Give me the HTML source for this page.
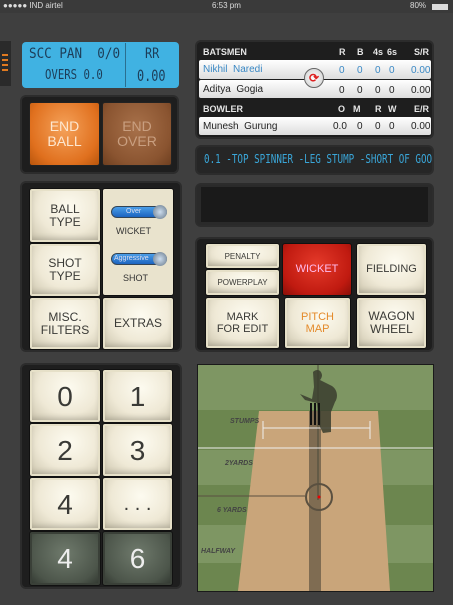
<!DOCTYPE html>
<html><head><meta charset="utf-8"><style>
*{margin:0;padding:0;box-sizing:border-box}
body{width:453px;height:605px;overflow:hidden;background:#3f3f3f;font-family:"Liberation Sans",sans-serif;position:relative}
.a{position:absolute}
.panel{position:absolute;background:#1e1e1e;border-radius:4px;box-shadow:0 0 0 2px #2c2c2c}
.c{position:absolute;display:flex;align-items:center;justify-content:center;text-align:center;color:#3a3a36;font-size:12px;line-height:13px;background:radial-gradient(ellipse at 55% 35%,#fdfbf0 0%,#efe9d6 55%,#c9c2aa 100%);border:1px solid #111;border-radius:3px;box-shadow:inset 0 0 0 2px #e6e0c8,inset 0 -4px 6px rgba(0,0,0,.18)}
.t{position:absolute;font-size:10px;color:#222}
.h{position:absolute;font-size:9px;color:#e6e6e6;font-weight:bold}
.lcd{font-family:"DejaVu Sans Mono","Liberation Mono",monospace;color:#1d3d58;transform-origin:left top;white-space:nowrap}
</style></head><body>
<div class="a" style="left:0;top:0;width:453px;height:13px;background:#3a3a3a"></div>
<div class="a" style="left:3px;top:1px;font-size:8px;color:#ddd">●●●●● IND airtel</div>
<div class="a" style="left:212px;top:1px;font-size:8px;color:#ddd">6:53 pm</div>
<div class="a" style="left:410px;top:1px;font-size:8px;color:#ddd">80%</div>
<div class="a" style="left:432px;top:4px;width:16px;height:6px;background:#ddd"></div>
<div class="a" style="left:0;top:41px;width:11px;height:45px;background:#2a2a2a"></div>
<div class="a" style="left:2px;top:54px;width:6px;height:2px;background:#e07a20;box-shadow:0 5px 0 #e07a20,0 10px 0 #e07a20,0 15px 0 #e07a20"></div>
<div class="a" style="left:22px;top:42px;width:157px;height:46px;background:#40b2e2;border-radius:4px"></div>
<div class="a" style="left:125px;top:43px;width:1px;height:44px;background:#2a6f90"></div>
<div class="a lcd" style="left:29px;top:46px;font-size:14px;transform:scaleX(.9)">SCC PAN &nbsp;0/0</div>
<div class="a lcd" style="left:45px;top:68px;font-size:13px;transform:scaleX(.82)">OVERS 0.0</div>
<div class="a lcd" style="left:145px;top:46px;font-size:14px;transform:scaleX(.85)">RR</div>
<div class="a lcd" style="left:137px;top:66px;font-size:16px;transform:scaleX(.74)">0.00</div>
<div class="panel" style="left:197px;top:42px;width:235px;height:95px"></div>
<div class="h" style="left:203px;top:47px">BATSMEN</div>
<div class="h" style="left:339px;top:47px">R</div><div class="h" style="left:357px;top:47px">B</div><div class="h" style="left:373px;top:47px">4s</div><div class="h" style="left:387px;top:47px">6s</div><div class="h" style="left:414px;top:47px">S/R</div>
<div class="a" style="left:199px;top:60px;width:232px;height:19px;background:linear-gradient(#fff,#ddd);border-radius:2px"></div>
<div class="a" style="left:199px;top:80px;width:232px;height:18px;background:linear-gradient(#fff,#ddd);border-radius:2px"></div>
<div class="t" style="left:203px;top:64px;color:#3a88c4">Nikhil &nbsp;Naredi</div>
<div class="t" style="left:339px;top:65px;color:#3a88c4">0</div><div class="t" style="left:357px;top:65px;color:#3a88c4">0</div><div class="t" style="left:375px;top:65px;color:#3a88c4">0</div><div class="t" style="left:389px;top:65px;color:#3a88c4">0</div><div class="t" style="left:411px;top:65px;color:#3a88c4">0.00</div>
<div class="t" style="left:203px;top:84px">Aditya &nbsp;Gogia</div>
<div class="t" style="left:339px;top:85px">0</div><div class="t" style="left:357px;top:85px">0</div><div class="t" style="left:375px;top:85px">0</div><div class="t" style="left:389px;top:85px">0</div><div class="t" style="left:411px;top:85px">0.00</div>
<div class="a" style="left:304px;top:68px;width:20px;height:20px;border-radius:50%;background:radial-gradient(#fff,#ccc);border:1px solid #666;color:#d22;font-size:12px;text-align:center;line-height:18px;font-weight:bold">⟳</div>
<div class="h" style="left:203px;top:104px">BOWLER</div>
<div class="h" style="left:338px;top:104px">O</div><div class="h" style="left:353px;top:104px">M</div><div class="h" style="left:375px;top:104px">R</div><div class="h" style="left:388px;top:104px">W</div><div class="h" style="left:414px;top:104px">E/R</div>
<div class="a" style="left:199px;top:117px;width:232px;height:18px;background:linear-gradient(#fff,#ddd);border-radius:2px"></div>
<div class="t" style="left:203px;top:121px">Munesh &nbsp;Gurung</div>
<div class="t" style="left:333px;top:121px">0.0</div><div class="t" style="left:357px;top:121px">0</div><div class="t" style="left:375px;top:121px">0</div><div class="t" style="left:389px;top:121px">0</div><div class="t" style="left:411px;top:121px">0.00</div>
<div class="panel" style="left:197px;top:147px;width:235px;height:26px;background:#262626"></div>
<div class="a lcd" style="left:204px;top:152px;font-size:12px;color:#3aa6d8;transform:scaleX(.77)">0.1 -TOP SPINNER -LEG STUMP -SHORT OF GOO</div>
<div class="panel" style="left:22px;top:97px;width:155px;height:75px"></div>
<div class="c" style="left:29px;top:102px;width:71px;height:64px;background:radial-gradient(ellipse at 50% 40%,#f5a25a,#e0701e 70%,#b8550c);color:#fde7d0;font-size:14px;line-height:15px;border-color:#222;box-shadow:none">END<br>BALL</div>
<div class="c" style="left:102px;top:102px;width:70px;height:64px;background:radial-gradient(ellipse at 50% 40%,#a8714a,#8a5430 70%,#6e3f20);color:#c99f80;font-size:14px;line-height:15px;border-color:#222;box-shadow:none">END<br>OVER</div>
<div class="panel" style="left:22px;top:183px;width:158px;height:167px"></div>
<div class="c" style="left:29px;top:188px;width:72px;height:55px">BALL<br>TYPE</div>
<div class="c" style="left:102px;top:188px;width:72px;height:108px;background:#e9e3cd;box-shadow:none"></div>
<div class="c" style="left:29px;top:243px;width:72px;height:54px">SHOT<br>TYPE</div>
<div class="c" style="left:29px;top:297px;width:72px;height:53px">MISC.<br>FILTERS</div>
<div class="c" style="left:102px;top:297px;width:72px;height:53px">EXTRAS</div>
<div class="a" style="left:111px;top:206px;width:56px;height:12px;border-radius:6px;background:linear-gradient(#4a9ee8,#1c64c0);border:1px solid #345;color:#dde;font-size:7px;line-height:10px;padding-left:14px">Over</div>
<div class="a" style="left:153px;top:205px;width:14px;height:14px;border-radius:50%;background:radial-gradient(#cde,#678)"></div>
<div class="a" style="left:116px;top:226px;font-size:9px;color:#333">WICKET</div>
<div class="a" style="left:111px;top:253px;width:56px;height:12px;border-radius:6px;background:linear-gradient(#4a9ee8,#1c64c0);border:1px solid #345;color:#dde;font-size:7px;line-height:10px;padding-left:2px">Aggressive</div>
<div class="a" style="left:153px;top:252px;width:14px;height:14px;border-radius:50%;background:radial-gradient(#cde,#678)"></div>
<div class="a" style="left:123px;top:273px;font-size:9px;color:#333">SHOT</div>
<div class="panel" style="left:197px;top:185px;width:235px;height:40px;background:#2a2a2a"></div>
<div class="a" style="left:201px;top:187px;width:227px;height:35px;background:#1a1a1a"></div>
<div class="panel" style="left:197px;top:239px;width:235px;height:111px"></div>
<div class="c" style="left:205px;top:243px;width:75px;height:26px;font-size:8px">PENALTY</div>
<div class="c" style="left:205px;top:269px;width:75px;height:27px;font-size:8px">POWERPLAY</div>
<div class="c" style="left:282px;top:243px;width:70px;height:53px;background:radial-gradient(ellipse at 50% 40%,#e53a2a,#c01a10 70%,#8a0f08);color:#fbe;font-size:11px;box-shadow:none">WICKET</div>
<div class="c" style="left:356px;top:243px;width:71px;height:53px;font-size:11px">FIELDING</div>
<div class="c" style="left:205px;top:297px;width:75px;height:52px;font-size:11px;line-height:12px">MARK<br>FOR EDIT</div>
<div class="c" style="left:284px;top:297px;width:67px;height:52px;font-size:11px;line-height:12px;color:#e48a2a">PITCH<br>MAP</div>
<div class="c" style="left:356px;top:297px;width:71px;height:52px;font-size:12px;line-height:13px">WAGON<br>WHEEL</div>
<div class="panel" style="left:22px;top:365px;width:158px;height:222px"></div>
<div class="c" style="left:29px;top:369px;width:72px;height:54px;font-size:28px">0</div>
<div class="c" style="left:102px;top:369px;width:71px;height:54px;font-size:28px">1</div>
<div class="c" style="left:29px;top:423px;width:72px;height:54px;font-size:28px">2</div>
<div class="c" style="left:102px;top:423px;width:71px;height:54px;font-size:28px">3</div>
<div class="c" style="left:29px;top:477px;width:72px;height:54px;font-size:28px">4</div>
<div class="c" style="left:102px;top:477px;width:71px;height:54px;font-size:20px">. . .</div>
<div class="c" style="left:29px;top:531px;width:72px;height:55px;font-size:28px;color:#eee;background:radial-gradient(ellipse at 50% 40%,#6f7a6c,#4c554a 70%,#2e342d);box-shadow:inset 0 0 0 2px #3a4038">4</div>
<div class="c" style="left:102px;top:531px;width:71px;height:55px;font-size:28px;color:#eee;background:radial-gradient(ellipse at 50% 40%,#6f7a6c,#4c554a 70%,#2e342d);box-shadow:inset 0 0 0 2px #3a4038">6</div>
<svg class="a" style="left:197px;top:364px" width="237" height="228" viewBox="197 364 237 228">
<rect x="197" y="364" width="237" height="228" fill="#1a1a1a"/>
<rect x="198" y="365" width="235" height="226" fill="#7e9663"/>
<rect x="198" y="410" width="235" height="40" fill="#6c864f"/>
<rect x="198" y="485" width="235" height="40" fill="#6c864f"/>
<rect x="198" y="563" width="235" height="28" fill="#6c864f"/>
<polygon points="259,411 378,411 390,591 238,591" fill="#c9a57a"/>
<rect x="309" y="411" width="12" height="180" fill="#7f6c52"/>
<line x1="318" y1="365" x2="318" y2="500" stroke="#4a4a3a" stroke-width="1"/>
<line x1="198" y1="448" x2="433" y2="448" stroke="#eee" stroke-width="1"/>
<line x1="263" y1="428" x2="370" y2="428" stroke="#eee" stroke-width="1"/>
<line x1="263" y1="421" x2="263" y2="439" stroke="#eee"/><line x1="370" y1="421" x2="370" y2="439" stroke="#eee"/>
<line x1="198" y1="496" x2="305" y2="496" stroke="#5a5040" stroke-width="1"/>
<circle cx="319" cy="497" r="13" fill="none" stroke="#5a5040" stroke-width="2"/>
<circle cx="319" cy="497" r="1.5" fill="#e00"/>
<path d="M313,372 c3,-3 8,-3 9,3 c0,3 -2,5 -2,5 l12,6 c6,4 6,12 3,16 l-4,10 l0,20 l-8,1 l-4,-8 l-2,-22 l-12,-3 l-5,-6 l12,5 l2,-12 z" fill="#3a3d2e" opacity="0.85"/>
<rect x="310" y="403" width="2" height="22" fill="#111"/><rect x="314" y="403" width="2" height="22" fill="#111"/><rect x="318" y="403" width="2" height="22" fill="#111"/>
<g font-family="Liberation Sans" font-size="7" font-weight="bold" font-style="italic" fill="#444">
<text x="230" y="423">STUMPS</text><text x="225" y="465">2YARDS</text><text x="217" y="512">6 YARDS</text><text x="201" y="553">HALFWAY</text></g>
</svg>
</body></html>
